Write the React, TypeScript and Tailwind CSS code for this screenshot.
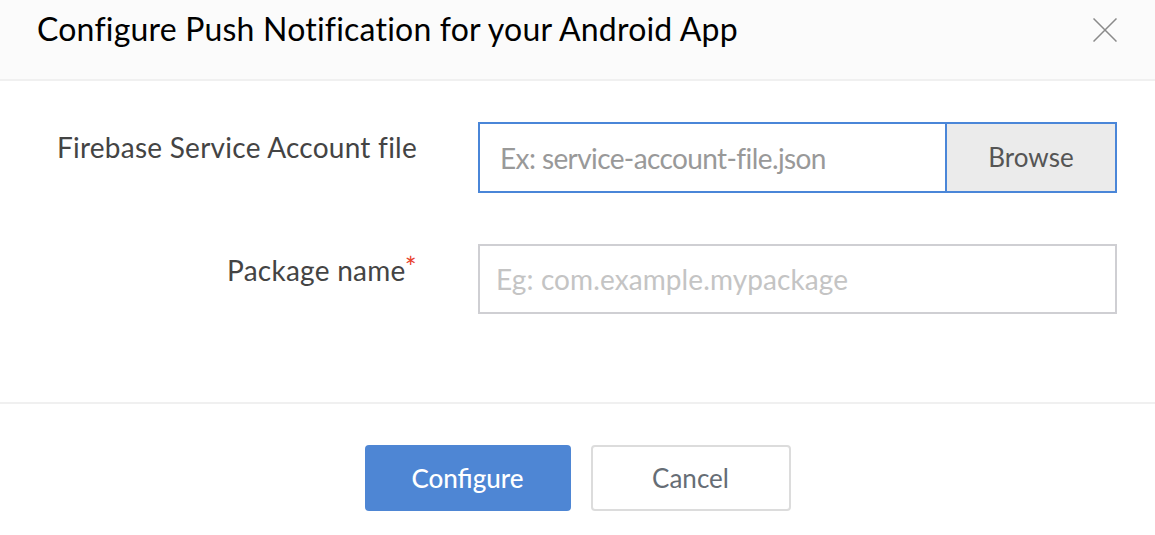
const font = { fontFamily: "Lato, 'Open Sans', sans-serif" };

export default function App() {
  return (
    <div className="w-[1155px] h-[535px] bg-white text-[#333]" style={font}>
      {/* Header */}
      <div className="h-[81px] bg-[#fbfbfb] border-b-2 border-[#f0f0f0] flex items-start justify-between pl-[37px] pr-[38px]">
        <h1 className="text-[32px] tracking-[0.2px] text-black leading-none pt-[13px]">
          Configure Push Notification for your Android App
        </h1>
        <svg className="mt-[18px]" width="24" height="24" viewBox="0 0 24 24" fill="none" stroke="#8a8a8a" strokeWidth="1.5">
          <path d="M0.5 0.5 L23.5 23.5 M23.5 0.5 L0.5 23.5" />
        </svg>
      </div>

      {/* Body */}
      <div className="h-[323px] border-b-2 border-[#f0f0f0] pt-[41px]">
        <div className="flex items-start">
          <label className="w-[417px] text-right text-[28px] tracking-[0.25px] text-[#444] leading-none pt-[11px]">
            Firebase Service Account file
          </label>
          <div className="ml-[61px] w-[639px] h-[71px] flex border-2 border-[#4a86d8]">
            <div className="flex-1 flex items-center pl-[20px] text-[28px] tracking-[-0.6px] text-[#999]">
              Ex: service-account-file.json
            </div>
            <div className="w-[170px] bg-[#ebebeb] border-l-2 border-[#4a86d8] flex items-center justify-center text-[26px] text-[#555]">
              Browse
            </div>
          </div>
        </div>

        <div className="flex items-start mt-[51px]">
          <label className="w-[417px] text-right text-[28px] tracking-[0.25px] text-[#444] leading-none pt-[12px]">
            Package name<span className="text-[#e8412c] text-[28px] relative top-[-3px]">*</span>
          </label>
          <div className="ml-[61px] w-[639px] h-[70px] flex items-center pl-[16px] border-2 border-[#cfcfd3] text-[28px] tracking-[0.1px] text-[#c4c4c4]">
            Eg: com.example.mypackage
          </div>
        </div>
      </div>

      {/* Footer */}
      <div className="flex justify-center gap-[20px] pt-[41px]">
        <button className="w-[206px] h-[66px] rounded-[4px] bg-[#4e86d4] text-white text-[26px] font-medium">
          Configure
        </button>
        <button className="w-[200px] h-[66px] rounded-[4px] border-2 border-[#dcdcdc] bg-white text-[#666d75] text-[26px]">
          Cancel
        </button>
      </div>
    </div>
  );
}
